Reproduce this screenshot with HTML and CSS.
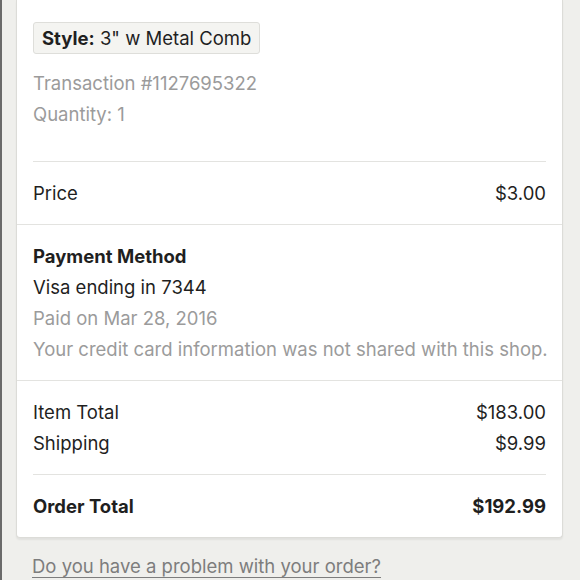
FILE: index.html
```html
<!DOCTYPE html>
<html>
<head>
<meta charset="utf-8">
<link rel="stylesheet" href="styles.css">
</head>
<body>
<div class="page">
  <div class="card">
    <div class="section item">
      <div class="badge"><b>Style:</b> 3" w Metal Comb</div>
      <div class="muted first">Transaction #1127695322</div>
      <div class="muted">Quantity: 1</div>
      <div class="inner-rule"></div>
      <div class="row price"><span>Price</span><span>$3.00</span></div>
    </div>
    <div class="section">
      <div class="strong">Payment Method</div>
      <div>Visa ending in 7344</div>
      <div class="muted">Paid on Mar 28, 2016</div>
      <div class="muted nowrap">Your credit card information was not shared with this shop.</div>
    </div>
    <div class="section last">
      <div class="row"><span>Item Total</span><span>$183.00</span></div>
      <div class="row"><span>Shipping</span><span>$9.99</span></div>
      <div class="inner-rule gap"></div>
      <div class="row strong total"><span>Order Total</span><span>$192.99</span></div>
    </div>
  </div>
  <a class="problem" href="#">Do you have a problem with your order?</a>
</div>
</body>
</html>
```
FILE: styles.css
```css
html, body {
  margin: 0;
  padding: 0;
  height: 100%;
  overflow: hidden;
}
body {
  background: #efefec;
  font-family: Inter, "Liberation Sans", sans-serif;
  font-size: 18.5px;
  line-height: 31px;
  color: #1f1f1f;
  border-left: 2px solid #6a6a6a;
  box-sizing: border-box;
}
.page {
  padding-left: 14px;
  width: 547px;
}
.card {
  background: #fff;
  border: 1px solid #dcdcd8;
  border-top: none;
  border-radius: 0 0 4px 4px;
  box-shadow: 0 2px 2px rgba(0,0,0,0.06);
}
.section {
  padding: 16px 16px 15px;
  border-bottom: 1px solid #e3e3e0;
}
.section.item {
  padding-top: 22px;
}
.section.last {
  border-bottom: none;
  padding-bottom: 15px;
}
.badge {
  display: inline-block;
  height: 30px;
  line-height: 30px;
  padding: 0 8px;
  background: #f4f4f1;
  border: 1px solid #dededa;
  border-radius: 3px;
}
.muted {
  color: #9b9b9b;
}
.nowrap {
  white-space: nowrap;
}
.muted.first {
  margin-top: 14px;
}
.inner-rule {
  height: 1px;
  background: #e3e3e0;
  margin-top: 31px;
  margin-bottom: 16px;
}
.inner-rule.gap {
  margin-top: 15px;
  margin-bottom: 16px;
}
.row {
  display: flex;
  justify-content: space-between;
}
.strong {
  font-weight: 700;
}
.problem {
  display: block;
  margin: 13px 0 0 16px;
  color: #7d7d7d;
  text-decoration: underline;
  text-underline-offset: 4px;
}
```
